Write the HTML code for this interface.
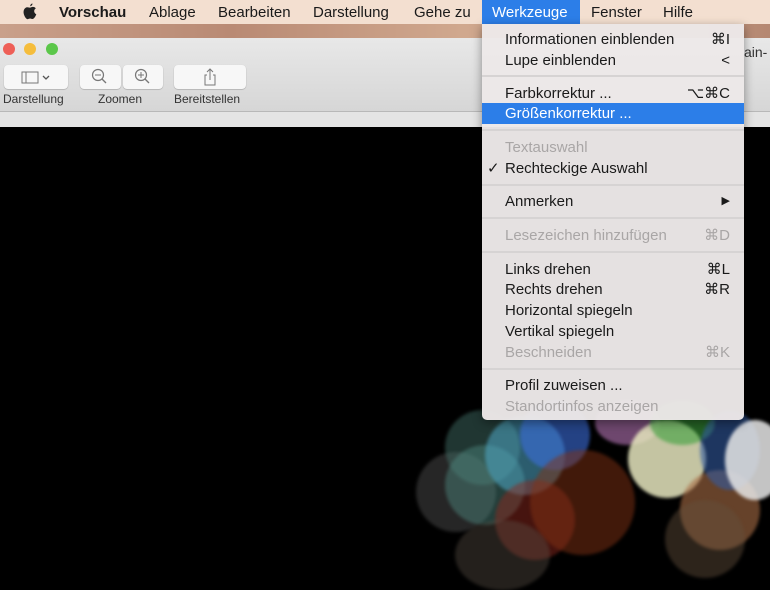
<!DOCTYPE html>
<html><head><meta charset="utf-8"><style>
*{margin:0;padding:0;box-sizing:border-box}
body{width:770px;height:578px;overflow:hidden;background:#000;font-family:"Liberation Sans",sans-serif;position:relative}
.mb{position:absolute;left:0;top:0;width:770px;height:24px;background:#f3dfd0;font-size:15px;color:#1a1a1a}
.mb span{position:absolute;top:4px}
.strip{position:absolute;left:0;top:24px;width:770px;height:14px;background:linear-gradient(90deg,#c9a08a,#b98a74 30%,#d0a88e 60%,#b58872)}
.win{position:absolute;left:0;top:38px;width:770px;height:74px;background:linear-gradient(#e8e8e8,#d6d6d6);border-bottom:1px solid #b8b8b8}
.win2{position:absolute;left:0;top:112px;width:770px;height:15px;background:#e4e4e4}
.dot{position:absolute;top:43px;width:12px;height:12px;border-radius:50%}
.btn{position:absolute;top:65px;height:24px;background:#f7f7f7;border-radius:4px;box-shadow:0 0.5px 1px rgba(0,0,0,.3)}
.lbl{position:absolute;top:92px;font-size:12px;color:#333}
.b{position:absolute;border-radius:50%;filter:blur(1.5px)}
.menu{position:absolute;left:482px;top:24px;width:262px;height:396px;background:rgba(236,232,232,.97);border-radius:0 0 5px 5px;box-shadow:0 3px 10px rgba(0,0,0,.4);font-size:15px;color:#1a1a1a}
.menu .r{position:absolute;left:23px;right:14px;height:21px;line-height:21px}
.menu .r i{font-style:normal;position:absolute;right:0}
.g{color:#a9a6a6}
.menu .sep{position:absolute;left:0;right:0;height:2px;background:#d6d3d3}
</style></head><body>
<div class="b" style="left:416px;top:452px;width:80px;height:80px;background:rgba(110,110,110,.35)"></div>
<div class="b" style="left:445px;top:410px;width:75px;height:75px;background:rgba(70,120,110,.45)"></div>
<div class="b" style="left:445px;top:445px;width:80px;height:80px;background:rgba(80,140,130,.45)"></div>
<div class="b" style="left:485px;top:415px;width:80px;height:80px;background:rgba(80,170,200,.55)"></div>
<div class="b" style="left:520px;top:400px;width:70px;height:70px;background:rgba(60,110,220,.6)"></div>
<div class="b" style="left:495px;top:480px;width:80px;height:80px;background:rgba(140,40,30,.5)"></div>
<div class="b" style="left:530px;top:450px;width:105px;height:105px;background:rgba(130,50,20,.5)"></div>
<div class="b" style="left:455px;top:520px;width:95px;height:70px;background:rgba(90,80,70,.4)"></div>
<div class="b" style="left:595px;top:400px;width:65px;height:45px;background:rgba(200,130,200,.55)"></div>
<div class="b" style="left:628px;top:420px;width:78px;height:78px;background:rgba(230,230,190,.85)"></div>
<div class="b" style="left:650px;top:400px;width:65px;height:45px;background:rgba(60,160,60,.6)"></div>
<div class="b" style="left:680px;top:470px;width:80px;height:80px;background:rgba(170,110,70,.6)"></div>
<div class="b" style="left:665px;top:500px;width:80px;height:78px;background:rgba(100,80,60,.45)"></div>
<div class="b" style="left:700px;top:410px;width:60px;height:80px;background:rgba(50,90,160,.6)"></div>
<div class="b" style="left:725px;top:420px;width:60px;height:80px;background:rgba(230,230,230,.85)"></div>

<div class="mb">
<svg style="position:absolute;left:23px;top:3px" width="14" height="17" viewBox="0 0 14 17"><path d="M9.5 0.5c0 1.4-1 2.6-2.3 2.7 0-1.3 1-2.6 2.3-2.7zM7 4.6c.8 0 1.8-.8 3-.7 1.2 0 2.2.6 2.8 1.5-2.4 1.4-2 4.8.5 5.8-.5 1.5-1.5 3.4-2.8 4.4-1 .7-1.8.2-2.8 0-1.2-.3-2 .5-3 .6C3 16.3 1.2 13 .7 10.5.1 7.3 1.6 4.3 4.3 4.2c1.1 0 2 .4 2.7.4z" fill="#222"/></svg>
<span style="left:59px;font-weight:bold">Vorschau</span>
<span style="left:149px">Ablage</span>
<span style="left:218px">Bearbeiten</span>
<span style="left:313px">Darstellung</span>
<span style="left:414px">Gehe zu</span>
<span style="left:482px;top:0;width:98px;height:24px;background:#2c7ee8;color:#fff;padding:4px 0 0 10px">Werkzeuge</span>
<span style="left:591px">Fenster</span>
<span style="left:663px">Hilfe</span>
</div>
<div class="strip"></div>
<div class="win"></div>
<div class="win2"></div>
<div style="position:absolute;left:744px;top:44px;font-size:14px;color:#333">ain-</div>
<div class="dot" style="left:3px;background:#ee5f57"></div>
<div class="dot" style="left:24px;background:#f5bd3c"></div>
<div class="dot" style="left:46px;background:#5bc74a"></div>
<div class="btn" style="left:4px;width:64px"><svg width="64" height="24"><rect x="18" y="7" width="16" height="11" fill="none" stroke="#777"/><line x1="22" y1="7" x2="22" y2="18" stroke="#777"/><path d="M39 11l3 3 3-3" fill="none" stroke="#555" stroke-width="1.3"/></svg></div>
<div class="btn" style="left:80px;width:41px"><svg width="41" height="24"><circle cx="18" cy="10" r="5.5" fill="none" stroke="#777" stroke-width="1.2"/><line x1="15" y1="10" x2="21" y2="10" stroke="#777"/><line x1="22" y1="14" x2="26" y2="18" stroke="#777" stroke-width="1.3"/></svg></div>
<div class="btn" style="left:123px;width:40px"><svg width="40" height="24"><circle cx="18" cy="10" r="5.5" fill="none" stroke="#777" stroke-width="1.2"/><line x1="15" y1="10" x2="21" y2="10" stroke="#777"/><line x1="18" y1="7" x2="18" y2="13" stroke="#777"/><line x1="22" y1="14" x2="26" y2="18" stroke="#777" stroke-width="1.3"/></svg></div>
<div class="btn" style="left:174px;width:72px"><svg width="72" height="24"><path d="M33 10h-2v10h10V10h-2" fill="none" stroke="#777"/><path d="M36 15V4M33 7l3-3 3 3" fill="none" stroke="#777"/></svg></div>
<div class="lbl" style="left:3px">Darstellung</div>
<div class="lbl" style="left:98px">Zoomen</div>
<div class="lbl" style="left:174px">Bereitstellen</div>

<div class="menu">
<div class="r" style="top:5px">Informationen einblenden<i>⌘I</i></div>
<div class="r" style="top:26px">Lupe einblenden<i>&lt;</i></div>
<div class="sep" style="top:51px"></div>
<div class="r" style="top:59px">Farbkorrektur ...<i>⌥⌘C</i></div>
<div class="r" style="top:79px;left:0;right:0;padding-left:23px;background:#2c7ee8;color:#fff">Größenkorrektur ...</div>
<div class="sep" style="top:105px"></div>
<div class="r g" style="top:113px">Textauswahl</div>
<div class="r" style="top:134px"><span style="position:absolute;left:-18px">✓</span>Rechteckige Auswahl</div>
<div class="sep" style="top:160px"></div>
<div class="r" style="top:167px">Anmerken<i style="font-size:11px">▶</i></div>
<div class="sep" style="top:193px"></div>
<div class="r g" style="top:201px">Lesezeichen hinzufügen<i>⌘D</i></div>
<div class="sep" style="top:227px"></div>
<div class="r" style="top:235px">Links drehen<i>⌘L</i></div>
<div class="r" style="top:255px">Rechts drehen<i>⌘R</i></div>
<div class="r" style="top:276px">Horizontal spiegeln</div>
<div class="r" style="top:297px">Vertikal spiegeln</div>
<div class="r g" style="top:318px">Beschneiden<i>⌘K</i></div>
<div class="sep" style="top:344px"></div>
<div class="r" style="top:351px">Profil zuweisen ...</div>
<div class="r g" style="top:372px">Standortinfos anzeigen</div>
</div>
</body></html>
